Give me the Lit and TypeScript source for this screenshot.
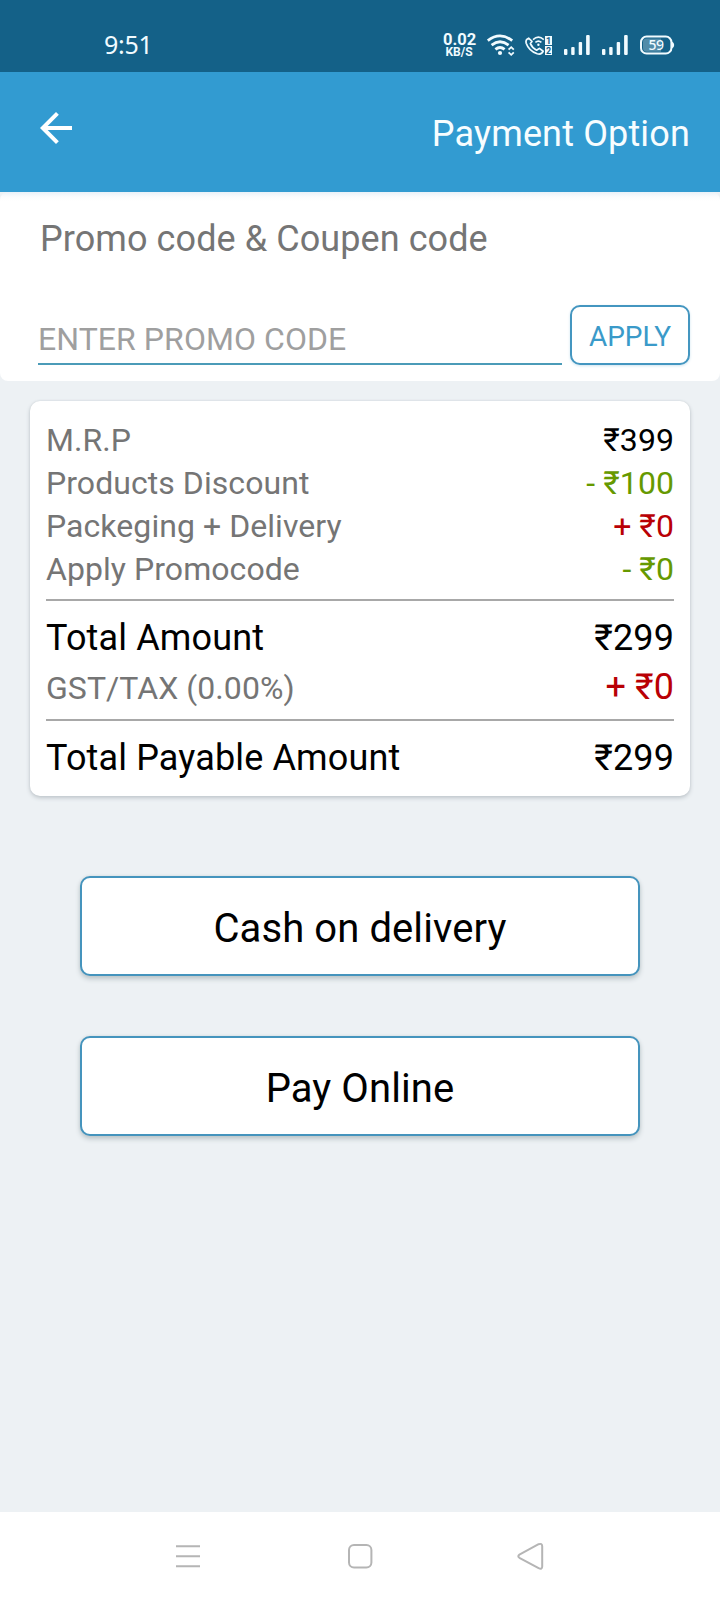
import { LitElement, html, css, svg } from "lit";
import { customElement } from "lit/decorators.js";
import { classMap } from "lit/directives/class-map.js";

type Row = { label: string; value: string; tone: string; kind: string };

@customElement("status-bar")
class StatusBar extends LitElement {
  static styles = css`
    :host {
      display: flex;
      height: 72px;
      box-sizing: border-box;
      padding: 32px 44px 0 104px;
      background: #146188;
      color: #f1fbff;
    }
    .time {
      font: 400 25px/24px "Noto Sans", sans-serif;
      letter-spacing: -0.3px;
      margin-right: auto;
    }
    .speed {
      width: 32px;
      text-align: center;
      font-family: Roboto, sans-serif;
      font-weight: 700;
      margin-right: 9px;
      white-space: nowrap;
    }
    .rate {
      font-size: 16.5px;
      line-height: 16px;
    }
    .unit {
      font-size: 12px;
      line-height: 9px;
    }
    svg {
      display: block;
      height: 26px;
      fill: none;
      stroke: currentColor;
    }
    .wifi {
      width: 32px;
      margin-right: 8px;
    }
    .call {
      width: 30px;
      margin-right: 8px;
    }
    .signal {
      width: 30px;
      margin-right: 8px;
    }
    .battery {
      width: 38px;
    }
    .solid {
      fill: currentColor;
      stroke: none;
    }
    .sim {
      fill: #146188;
      stroke: none;
      font: 700 9px "Roboto", sans-serif;
    }
    .level {
      fill: currentColor;
      stroke: none;
      font: 500 14px "Noto Sans", sans-serif;
    }
  `;

  private signal() {
    return html`<svg class="signal" viewBox="562 32 30 26">
      <g class="solid">
        <rect x="564" y="49" width="3.4" height="6" rx="1" />
        <rect x="571.2" y="47" width="3.4" height="8" rx="1" />
        <rect x="578.7" y="42" width="3.4" height="13" rx="1" />
        <rect x="586.1" y="35" width="3.6" height="20" rx="1" />
      </g>
    </svg>`;
  }

  render() {
    return html`
      <div class="time">9:51</div>
      <div class="speed">
        <div class="rate">0.02</div>
        <div class="unit">KB/S</div>
      </div>
      <svg class="wifi" viewBox="484 32 32 26">
        <g stroke-width="2.8">
          <path d="M487.8 40.6 Q500 31.2 512.2 40.6" />
          <path d="M491.6 45.1 Q500 38.4 508.6 45.1" />
          <path d="M495.4 49.3 Q500 45.6 504.6 49.3" />
        </g>
        <circle class="solid" cx="500" cy="53" r="2.1" />
        <path d="M508.6 49.6 L511.2 47.2 L513.8 49.6 M508.6 52.4 L511.2 54.8 L513.8 52.4" stroke-width="1.8" />
      </svg>
      <svg class="call" viewBox="524 32 30 26">
        <path
          d="M528.6 38.2 Q525.2 39.6 526.2 43.2 Q528.8 50.8 537.2 53.8 Q541.6 55 543.2 51.2 L539.4 48.4 L536.6 50.2 Q532 47.6 530.4 43.6 L532 41.4 L528.6 38.2 Z"
          stroke-width="1.7"
          stroke-linejoin="round"
        />
        <path d="M533 39.6 Q538.4 34.6 543.8 39.6 M535.4 42.4 Q538.4 39.8 541.4 42.4" stroke-width="1.5" />
        <circle class="solid" cx="538.4" cy="44.8" r="1.2" />
        <rect class="solid" x="545" y="36" width="7" height="9" />
        <rect class="solid" x="545" y="46" width="7" height="9" />
        <text class="sim" x="546" y="43.8">1</text>
        <text class="sim" x="546" y="53.8">2</text>
      </svg>
      ${this.signal()} ${this.signal()}
      <svg class="battery" viewBox="638 32 38 26">
        <rect x="641" y="36.6" width="30.4" height="16.9" rx="5.6" stroke-width="2" />
        <path class="solid" opacity="0.28" d="M646.6 38.4 H661 V51.7 H646.6 Q643 51.7 643 48 V42 Q643 38.4 646.6 38.4 Z" />
        <path class="solid" d="M672 41.4 Q674.2 42.4 674.2 45 Q674.2 47.6 672 48.6 Z" />
        <text class="level" x="656.2" y="50.1" text-anchor="middle" textLength="15.4">59</text>
      </svg>
    `;
  }
}

@customElement("promo-card")
class PromoCard extends LitElement {
  static styles = css`
    :host {
      display: block;
      height: 189px;
      box-sizing: border-box;
      padding: 23px 30px 0 38px;
      background: linear-gradient(#e9f1f8 0, #fbfcfd 5px, #fff 9px);
      border-radius: 8px;
      font-family: Roboto, sans-serif;
    }
    .title {
      margin: 0 0 0 2px;
      font-size: 36px;
      font-weight: 400;
      line-height: 48px;
      letter-spacing: 0.08px;
      color: #757575;
    }
    .form {
      display: flex;
      gap: 8px;
      margin-top: 42px;
      height: 60px;
    }
    .field {
      flex: 1;
      box-sizing: border-box;
      border-bottom: 2px solid #4b9bb8;
      font-size: 32px;
      line-height: 69px;
      letter-spacing: 0.06px;
      color: #9f9f9f;
    }
    .apply {
      width: 120px;
      box-sizing: border-box;
      border: 2px solid #4496c0;
      border-radius: 10px;
      background: #fff;
      box-shadow: 0 1px 3px #cfe4f0;
      color: #3a9ac9;
      font-size: 28px;
      line-height: 60px;
      text-align: center;
    }
  `;
  render() {
    return html`
      <h2 class="title">Promo code &amp; Coupen code</h2>
      <div class="form">
        <div class="field">ENTER PROMO CODE</div>
        <div class="apply">APPLY</div>
      </div>
    `;
  }
}

@customElement("price-summary")
class PriceSummary extends LitElement {
  static styles = css`
    :host {
      display: block;
      height: 395px;
      box-sizing: border-box;
      margin: 20px 30px 0;
      padding: 18px 16px 0;
      background: #fff;
      border-radius: 10px;
      box-shadow: 0 2px 4px #bfc6cb, 0 0 2px #cdd3d7;
      font-family: Roboto, sans-serif;
      letter-spacing: 0.06px;
    }
    .row {
      display: flex;
      justify-content: space-between;
      align-items: baseline;
      height: 43px;
      font-size: 32px;
      line-height: 43px;
      color: #757575;
    }
    .total,
    .tax {
      height: 48px;
      line-height: 48px;
    }
    .tax {
      line-height: 50px;
    }
    .total {
      font-size: 36px;
      letter-spacing: 0.14px;
      color: #000;
    }
    .tax .value {
      font-size: 36px;
    }
    .black {
      color: #000;
    }
    .green {
      color: #669900;
    }
    .red {
      color: #b90005;
    }
    .rule {
      height: 2px;
      background: #a8a8a8;
    }
    .rule.first {
      margin: 8px 0 13px;
    }
    .rule.second {
      margin: 9px 0 13px;
    }
  `;

  private items: Row[] = [
    { label: "M.R.P", value: "₹399", tone: "black", kind: "" },
    { label: "Products Discount", value: "- ₹100", tone: "green", kind: "" },
    { label: "Packeging + Delivery", value: "+ ₹0", tone: "red", kind: "" },
    { label: "Apply Promocode", value: "- ₹0", tone: "green", kind: "" },
  ];

  private row(r: Row) {
    return html`<div class=${classMap({ row: true, total: r.kind === "total", tax: r.kind === "tax" })}>
      <span>${r.label}</span>
      <span class="value ${r.tone}">${r.value}</span>
    </div>`;
  }

  render() {
    return html`
      ${this.items.map((r) => this.row(r))}
      <div class="rule first"></div>
      ${this.row({ label: "Total Amount", value: "₹299", tone: "black", kind: "total" })}
      ${this.row({ label: "GST/TAX (0.00%)", value: "+ ₹0", tone: "red", kind: "tax" })}
      <div class="rule second"></div>
      ${this.row({ label: "Total Payable Amount", value: "₹299", tone: "black", kind: "total" })}
    `;
  }
}

@customElement("nav-bar")
class NavBar extends LitElement {
  static styles = css`
    :host {
      display: flex;
      align-items: center;
      justify-content: space-between;
      height: 88px;
      box-sizing: border-box;
      padding: 0 174px 0 173px;
      background: #fff;
    }
    svg {
      width: 30px;
      height: 30px;
      fill: none;
      stroke: #b5b5b5;
      stroke-width: 2;
      stroke-linejoin: round;
    }
  `;
  private icons = [
    svg`<path d="M3 5.3H27M3 15.3H27M3 25.3H27" />`,
    svg`<rect x="4" y="4" width="22.4" height="22.4" rx="5" />`,
    svg`<path d="M3.4 13.6 L22.6 3.2 Q26.2 2 26.2 5.2 V25.6 Q26.2 28.8 22.6 27.2 L3.4 16.8 Q1.2 15.2 3.4 13.6 Z" />`,
  ];
  render() {
    return this.icons.map((i) => html`<svg viewBox="0 0 30 30">${i}</svg>`);
  }
}

@customElement("app-root")
class AppRoot extends LitElement {
  static styles = css`
    :host {
      display: flex;
      flex-direction: column;
      width: 720px;
      height: 1600px;
      background: #edf1f4;
      font-family: Roboto, sans-serif;
    }
    .header {
      display: flex;
      justify-content: space-between;
      height: 120px;
      box-sizing: border-box;
      padding: 32px 30px 0 32px;
      background: #329bd1;
      color: #f7fdff;
    }
    .back {
      width: 48px;
      height: 48px;
      fill: #fff;
    }
    .heading {
      margin: 6px 0 0;
      font-size: 36px;
      font-weight: 400;
      line-height: 48px;
      letter-spacing: 0.15px;
    }
    .actions {
      flex: 1;
      display: flex;
      flex-direction: column;
      gap: 60px;
      padding: 80px 80px 0;
    }
    .pay {
      height: 100px;
      box-sizing: border-box;
      border: 2px solid #4594bd;
      border-radius: 10px;
      background: #fff;
      box-shadow: 0 3px 5px #bcc5c9, 0 0 3px #d5dde0;
      font-size: 40px;
      line-height: 102px;
      letter-spacing: 0.1px;
      text-align: center;
      color: #000;
    }
  `;
  render() {
    return html`
      <status-bar></status-bar>
      <div class="header">
        <svg class="back" viewBox="0 0 24 24">
          <path d="M20 11H7.83l5.59-5.59L12 4l-8 8 8 8 1.41-1.41L7.83 13H20v-2z" />
        </svg>
        <h1 class="heading">Payment Option</h1>
      </div>
      <promo-card></promo-card>
      <price-summary></price-summary>
      <div class="actions">
        <div class="pay">Cash on delivery</div>
        <div class="pay">Pay Online</div>
      </div>
      <nav-bar></nav-bar>
    `;
  }
}
